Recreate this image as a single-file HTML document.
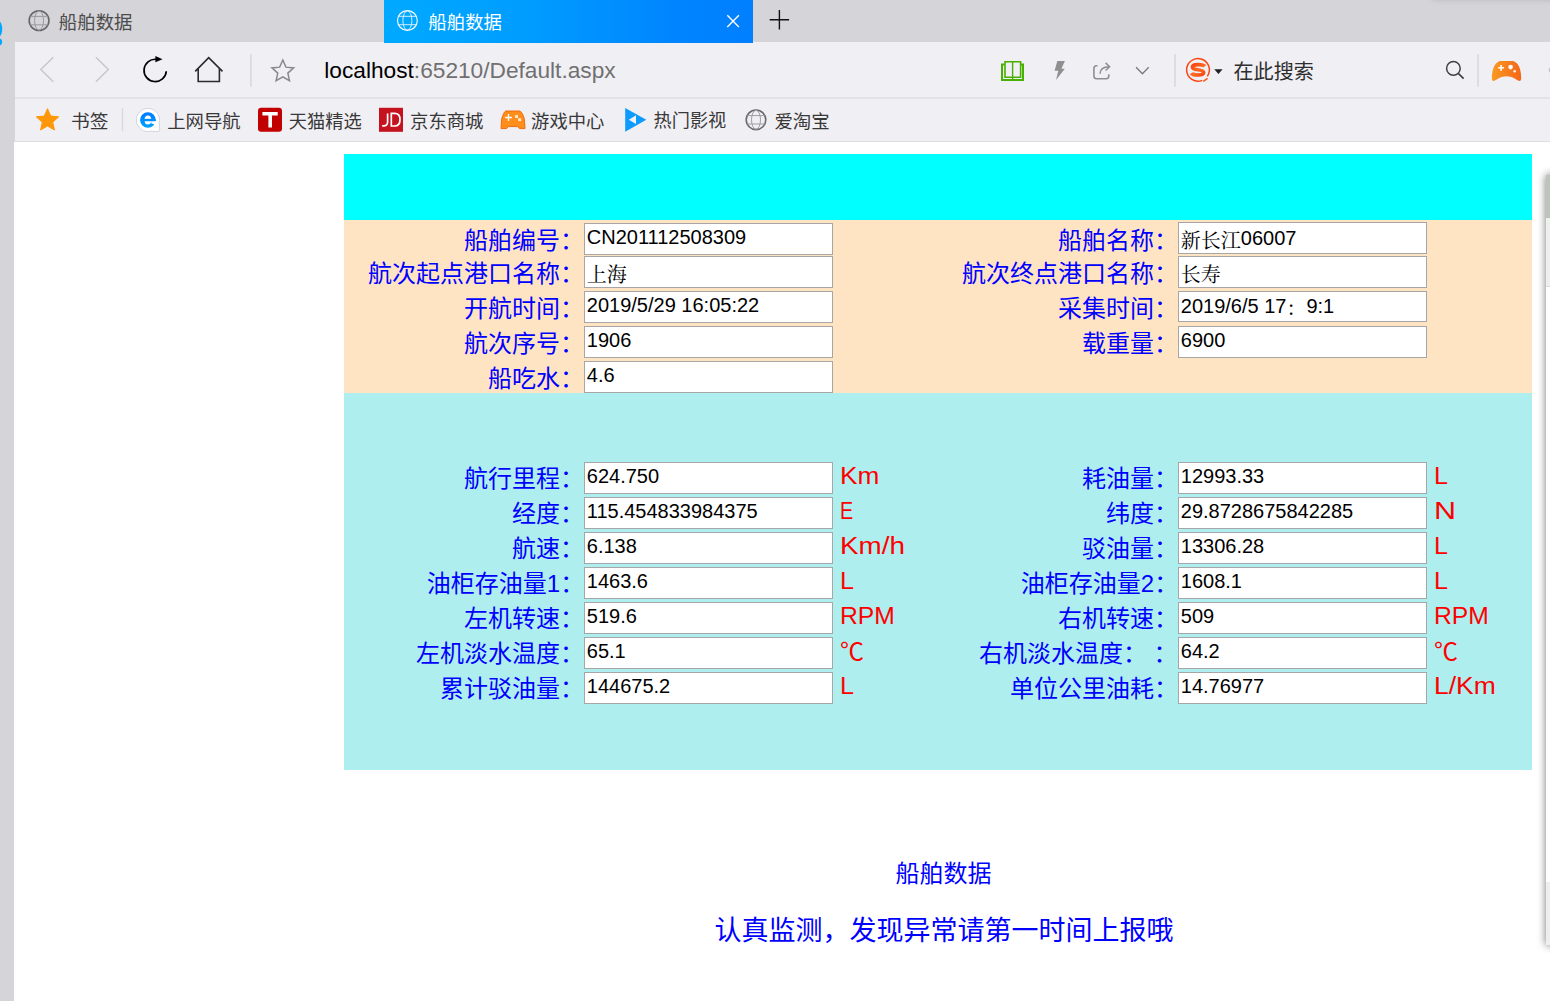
<!DOCTYPE html>
<html lang="zh-CN"><head><meta charset="utf-8"><title>船舶数据</title>
<style>
html,body{margin:0;padding:0}
body{width:1550px;height:1001px;overflow:hidden;position:relative;background:#fff;font-family:"Liberation Sans",sans-serif;color:#000}
div,svg,span,input{position:absolute;box-sizing:border-box}
.r{overflow:hidden;white-space:nowrap;font-family:"Liberation Sans","Noto Sans CJK SC",sans-serif}
.r span{left:0;top:0;white-space:nowrap}
.in .r{font-family:"Liberation Sans","Noto Serif CJK SC",serif}
.blk{position:absolute}
.in{height:31.5px;width:249px;background:#fff;border:1px solid #a6a6a6;overflow:hidden}
.in b{position:absolute;font-weight:normal;font-size:20px;line-height:24px;left:1.8px;top:1.2px;white-space:pre;color:#000}
.u{color:#f00;font-size:24.4px;line-height:28px;white-space:nowrap;transform-origin:0 50%}
.ico{overflow:visible}
</style></head>
<body>
<div class="blk" style="left:0;top:0;width:1550px;height:42px;background:#d5d4d9"></div>
<div class="blk" style="left:0;top:42px;width:14px;height:959px;background:#d5d4d9"></div>
<div class="blk" style="left:14px;top:42px;width:1px;height:99px;background:#d5d4d9"></div>
<div class="blk" style="left:15px;top:42px;width:1535px;height:100px;background:#f0eff4"></div>
<div class="blk" style="left:15px;top:97px;width:1535px;height:1.5px;background:#e3e3e7"></div>
<div class="blk" style="left:14px;top:140.6px;width:1536px;height:1.4px;background:#dddde1"></div>
<div class="blk" style="left:1433px;top:-14px;width:200px;height:12px;box-shadow:0 0 7px rgba(0,0,0,.25)"></div>
<svg class="ico" style="left:0;top:0" width="6" height="50"><ellipse cx="-1" cy="29" rx="3.2" ry="7.5" fill="#00a8ff"/><ellipse cx="-1" cy="42" rx="3.2" ry="3.6" fill="#00a8ff"/></svg>
<svg class="ico" style="left:0;top:0" width="1550" height="150" fill="none"><circle cx="39.05" cy="20.6" r="9.9" stroke="#666666" stroke-width="1.6"/><ellipse cx="39.05" cy="20.6" rx="4.5" ry="9.6" stroke="#9a9a9e" stroke-width="1"/><path d="M30.25 16.4h17.6 M30.25 24.8h17.6" stroke="#9a9a9e" stroke-width="1"/></svg>
<div class="r " style="left:58.85px;top:10.17px;width:73.72px;height:25.80px;font-size:18.43px;line-height:25.80px"><span style="color:#4c4c4c">船舶数据</span></div>
<div class="blk" style="left:384px;top:0;width:369px;height:43px;background:linear-gradient(90deg,#00a9ff 0%,#009cff 40%,#0084ff 80%,#007fff 100%)"></div>
<svg class="ico" style="left:0;top:0" width="1550" height="150" fill="none"><circle cx="407.4" cy="20.5" r="9.9" stroke="#ffffff" stroke-width="1.1"/><ellipse cx="407.4" cy="20.5" rx="4.5" ry="9.6" stroke="#e6f4ff" stroke-width="0.9"/><path d="M398.6 16.3h17.6 M398.6 24.7h17.6" stroke="#e6f4ff" stroke-width="0.9"/></svg>
<div class="r " style="left:428.36px;top:10.20px;width:73.62px;height:25.77px;font-size:18.40px;line-height:25.77px"><span style="color:#ffffff">船舶数据</span></div>
<svg class="ico" style="left:0;top:0" width="1550" height="50" fill="none"><path d="M727.3 15.3l11.6 11.6M738.9 15.3l-11.6 11.6" stroke="#fff" stroke-width="1.4"/><path d="M769.7 19.8h19.4M779.4 10.1v19.5" stroke="#111" stroke-width="1.4"/></svg>
<svg class="ico" style="left:0;top:0" width="1550" height="100" fill="none" stroke-linecap="butt"><path d="M53.3 57.3L40.8 69.6L53.3 81.8" stroke="#c6c6c8" stroke-width="1.4"/><path d="M95.9 57.3L108.4 69.6L95.9 81.8" stroke="#c6c6c8" stroke-width="1.4"/><path d="M166.3 71.2A11.15 11.15 0 1 1 156.2 59.3" stroke="#000" stroke-width="1.7"/><path d="M155.4 56.1L162.5 59.2L155.4 62.3z" fill="#000"/><path d="M195.2 71.4L208.7 57.6L222.5 71.4M198.2 68.6V81.5H219.4V68.6" stroke="#2b2b2b" stroke-width="1.6" stroke-linejoin="miter"/><path d="M250.9 54V86.8M1175 54V86.8M1478 54V86.8" stroke="#d9d9dd" stroke-width="1.6"/><path d="M282.80 60.05L285.92 67.16L293.64 67.93L287.84 73.09L289.50 80.67L282.80 76.75L276.10 80.67L277.76 73.09L271.96 67.93L279.68 67.16z" stroke="#898989" stroke-width="1.5" stroke-linejoin="miter"/><path d="M1004.6 64.6H1002V79.9H1023V64.6H1020.6" stroke="#48b000" stroke-width="2"/><path d="M1005 61.8V77.3H1020.6V61.8z" stroke="#48b000" stroke-width="1.6"/><path d="M1012.6 62V80" stroke="#48b000" stroke-width="1.4"/><path d="M1057.3 61H1064.9L1061.4 68.7H1064.8L1056 79.9L1058.3 70.7H1054.6z" fill="#8f8f8f"/><path d="M1097.5 65.8H1096.6Q1093.9 65.8 1093.9 68.6V76Q1093.9 78.8 1096.7 78.8H1106Q1108.8 78.8 1108.8 76V74.2" stroke="#909090" stroke-width="1.6"/><path d="M1100 73.8Q1100.2 66.8 1109 66.7M1105.6 62.9L1109.6 66.7L1105.6 70.5" stroke="#909090" stroke-width="1.5"/><path d="M1136.1 67.3L1142.4 73.8L1148.7 67.3" stroke="#7a7a7a" stroke-width="1.3"/><defs><linearGradient id="sg" x1="0" y1="0" x2="1" y2="1"><stop offset="0" stop-color="#f8420f"/><stop offset="0.55" stop-color="#ff6a22"/><stop offset="1" stop-color="#f8420f"/></linearGradient></defs><path d="M1207.3 76.41A11.35 11.35 0 1 0 1202.25 80.42" stroke="#fa4410" stroke-width="1.5"/><path d="M1203.3 81.4L1207.6 78.4" stroke="#fb5a14" stroke-width="1.7"/><path d="M1204.7 66.4C1203.7 64.9 1201 64.65 1198 64.65C1194.4 64.65 1192.45 65.6 1192.45 67.2C1192.45 68.9 1195 69.3 1198 69.8C1201 70.3 1203.6 70.8 1203.6 72.6C1203.6 74.4 1201.4 75 1198 75C1194.6 75 1192.2 74.6 1191.5 73.1" stroke="url(#sg)" stroke-width="3.7"/><path d="M1214.3 69.2H1222.6L1218.45 74z" fill="#222"/><circle cx="1453.4" cy="68.4" r="6.8" stroke="#404040" stroke-width="1.5"/><path d="M1458.3 73.4L1463.6 78.6" stroke="#404040" stroke-width="1.7"/><defs><linearGradient id="gp" x1="0" y1="0" x2="1" y2="0"><stop offset="0" stop-color="#f99a22"/><stop offset="1" stop-color="#f56618"/></linearGradient></defs><path d="M1499.6 61H1513.4L1516.9 63.3C1519.4 66.2 1521.2 70.6 1521.2 78.5Q1521.2 81.2 1519 81C1516 79.6 1512 76.3 1506.5 76.3C1501 76.3 1497 79.6 1494 81Q1491.9 81.2 1491.9 78.5C1491.9 70.6 1493.7 66.2 1496.2 63.3z" fill="url(#gp)"/><path d="M1498.2 67.8H1504M1501.1 64.9V70.7" stroke="#fff" stroke-width="1.5"/><circle cx="1510.6" cy="67.1" r="2.3" fill="#fff"/><circle cx="1514.7" cy="71.3" r="1.2" fill="#fff"/><circle cx="1552" cy="70" r="3.3" fill="#c4c4c8"/></svg>
<div class="blk" style="left:324.3px;top:56.3px;height:28px;font-size:22.7px;line-height:28px;white-space:nowrap;color:#707070"><i style="font-style:normal;color:#000">localhost</i>:65210/Default.aspx</div>
<div class="r " style="left:1233.54px;top:58.00px;width:80.41px;height:28.14px;font-size:20.10px;line-height:28.14px"><span style="color:#2e2e2e">在此搜索</span></div>
<svg class="ico" style="left:0;top:0" width="1550" height="150" fill="none"><path d="M47.50 108.70L50.73 116.05L58.72 116.85L52.73 122.20L54.44 130.05L47.50 126.00L40.56 130.05L42.27 122.20L36.28 116.85L44.27 116.05z" fill="#ff9708" stroke="#ff9708" stroke-width="1" stroke-linejoin="round"/><path d="M122.5 108V131.3" stroke="#d8d8dc" stroke-width="1.2"/><defs><linearGradient id="eg" gradientUnits="userSpaceOnUse" x1="0" y1="112" x2="0" y2="128"><stop offset="0" stop-color="#0078ff"/><stop offset="1" stop-color="#00a4ff"/></linearGradient></defs><path d="M151 131.2A11.6 11.6 0 1 1 159.2 123L159.6 129.8Q159.6 131.6 157.8 131.6z" fill="#fff" stroke="#cdd0d8" stroke-width="0.9"/><path fill-rule="evenodd" d="M140.1 120a7.8 7.8 0 1 0 15.6 0a7.8 7.8 0 1 0-15.6 0zM144.5 120a3.4 4.5 0 1 0 6.8 0a3.4 4.5 0 1 0-6.8 0z" fill="url(#eg)"/><rect x="144" y="118.85" width="11.6" height="2.4" fill="url(#eg)"/><path d="M151.2 121.3H157V125.4L151.2 123.3z" fill="#fff"/><rect x="258" y="107.8" width="24" height="24" rx="3.2" fill="#c10000"/><path d="M262.4 113.8H277.7M270.2 113.8V127.4" stroke="#fff" stroke-width="3.6"/><rect x="379" y="107.8" width="24" height="24" fill="#c5121f"/><path d="M382.2 125.6Q387.6 126.6 387.6 122V113.4M391.3 113.4V126H394.6Q400 126 400 119.7Q400 113.4 394.6 113.4z" stroke="#fff" stroke-width="1.7"/><path d="M505.6 111H519.6L521.4 112.2L523.2 115.4L524.4 119.2L525 128.6H519.6L517.4 126.6H508.6L506.4 128.6H501L501.6 119.2L502.8 115.4L504.4 112.2z" fill="#ff8e1c" stroke="#ea6404" stroke-width="0.9"/><path d="M505.1 117.5H511.9M508.5 114.1V120.9" stroke="#fff" stroke-width="1.3"/><rect x="515.1" y="115.1" width="2.9" height="2.9" fill="#ffe9cf"/><rect x="518.2" y="118.2" width="2.9" height="2.9" fill="#ffe9cf"/><path d="M625.2 108L646.3 119.7L625.2 131.8z" fill="#0d9bff"/><path d="M628.8 119.7L636 115.3V124.1z" fill="#eef4ff"/></svg>
<svg class="ico" style="left:0;top:0" width="1550" height="150" fill="none"><circle cx="756" cy="119.8" r="9.8" stroke="#6a6a6a" stroke-width="1.6"/><ellipse cx="756" cy="119.8" rx="4.5" ry="9.5" stroke="#9e9ea2" stroke-width="1"/><path d="M747.2 115.6h17.6 M747.2 124h17.6" stroke="#9e9ea2" stroke-width="1"/></svg>
<div class="r " style="left:71.08px;top:108.60px;width:37.39px;height:26.18px;font-size:18.70px;line-height:26.18px"><span style="color:#383838">书签</span></div>
<div class="r " style="left:167.26px;top:108.92px;width:73.53px;height:25.73px;font-size:18.38px;line-height:25.73px"><span style="color:#383838">上网导航</span></div>
<div class="r " style="left:288.73px;top:109.03px;width:73.09px;height:25.58px;font-size:18.27px;line-height:25.58px"><span style="color:#383838">天猫精选</span></div>
<div class="r " style="left:410.04px;top:108.92px;width:73.51px;height:25.73px;font-size:18.38px;line-height:25.73px"><span style="color:#383838">京东商城</span></div>
<div class="r " style="left:531.10px;top:108.97px;width:73.32px;height:25.66px;font-size:18.33px;line-height:25.66px"><span style="color:#383838">游戏中心</span></div>
<div class="r " style="left:653.62px;top:109.12px;width:72.72px;height:25.45px;font-size:18.18px;line-height:25.45px"><span style="color:#383838">热门影视</span></div>
<div class="r " style="left:774.42px;top:108.84px;width:55.38px;height:25.84px;font-size:18.46px;line-height:25.84px"><span style="color:#383838">爱淘宝</span></div>
<div class="blk" style="left:344px;top:154px;width:1188px;height:66px;background:#00ffff"></div>
<div class="blk" style="left:344px;top:220px;width:1188px;height:173px;background:#ffe4c4"></div>
<div class="blk" style="left:344px;top:393px;width:1188px;height:377px;background:#afeeee"></div>
<div class="r " style="left:464.00px;top:223.50px;width:120.00px;height:33.60px;font-size:24.00px;line-height:33.60px"><span style="color:#0000ff">船舶编号：</span></div>
<div class="in" style="left:584px;top:223.1px"><b>CN201112508309</b></div>
<div class="r " style="left:368.00px;top:257.10px;width:216.00px;height:33.60px;font-size:24.00px;line-height:33.60px"><span style="color:#0000ff">航次起点港口名称：</span></div>
<div class="in" style="left:584px;top:256.2px"><div class="r" style="left:1.80px;top:3.80px;width:40.00px;height:28.00px;font-size:20.00px;line-height:28.00px"><span style="color:#000">上海</span></div></div>
<div class="r " style="left:464.00px;top:291.70px;width:120.00px;height:33.60px;font-size:24.00px;line-height:33.60px"><span style="color:#0000ff">开航时间：</span></div>
<div class="in" style="left:584px;top:291.1px"><b>2019/5/29 16:05:22</b></div>
<div class="r " style="left:464.00px;top:326.70px;width:120.00px;height:33.60px;font-size:24.00px;line-height:33.60px"><span style="color:#0000ff">航次序号：</span></div>
<div class="in" style="left:584px;top:326.3px"><b>1906</b></div>
<div class="r " style="left:488.00px;top:361.60px;width:96.00px;height:33.60px;font-size:24.00px;line-height:33.60px"><span style="color:#0000ff">船吃水：</span></div>
<div class="in" style="left:584px;top:361.2px"><b>4.6</b></div>
<div class="r " style="left:1058.00px;top:223.50px;width:120.00px;height:33.60px;font-size:24.00px;line-height:33.60px"><span style="color:#0000ff">船舶名称：</span></div>
<div class="in" style="left:1178px;top:222.4px"><div class="r" style="left:1.80px;top:3.80px;width:60.00px;height:28.00px;font-size:20.00px;line-height:28.00px"><span style="color:#000">新长江</span></div><b style="left:61.80px;top:2.7px">06007</b></div>
<div class="r " style="left:962.00px;top:257.10px;width:216.00px;height:33.60px;font-size:24.00px;line-height:33.60px"><span style="color:#0000ff">航次终点港口名称：</span></div>
<div class="in" style="left:1178px;top:256.2px"><div class="r" style="left:1.80px;top:3.80px;width:40.00px;height:28.00px;font-size:20.00px;line-height:28.00px"><span style="color:#000">长寿</span></div></div>
<div class="r " style="left:1058.00px;top:291.70px;width:120.00px;height:33.60px;font-size:24.00px;line-height:33.60px"><span style="color:#0000ff">采集时间：</span></div>
<div class="in" style="left:1178px;top:290.5px"><b style="left:1.80px;top:2.7px">2019/6/5 17</b><div class="r" style="left:107.44px;top:3.80px;width:20.00px;height:28.00px;font-size:20.00px;line-height:28.00px"><span style="color:#000">：</span></div><b style="left:127.44px;top:2.7px">9:1</b></div>
<div class="r " style="left:1082.00px;top:326.70px;width:96.00px;height:33.60px;font-size:24.00px;line-height:33.60px"><span style="color:#0000ff">载重量：</span></div>
<div class="in" style="left:1178px;top:326px"><b>6900</b></div>
<div class="r " style="left:464.00px;top:462.35px;width:120.00px;height:33.60px;font-size:24.00px;line-height:33.60px"><span style="color:#0000ff">航行里程：</span></div>
<div class="in" style="left:584px;top:462.2px"><b>624.750</b></div>
<div class="u" style="left:840.1px;top:461.5px;transform:scaleX(1.075)">Km</div>
<div class="r " style="left:512.00px;top:497.35px;width:72.00px;height:33.60px;font-size:24.00px;line-height:33.60px"><span style="color:#0000ff">经度：</span></div>
<div class="in" style="left:584px;top:497.2px"><b>115.454833984375</b></div>
<div class="u" style="left:840.1px;top:496.5px;transform:scaleX(0.81)">E</div>
<div class="r " style="left:512.00px;top:532.35px;width:72.00px;height:33.60px;font-size:24.00px;line-height:33.60px"><span style="color:#0000ff">航速：</span></div>
<div class="in" style="left:584px;top:532.2px"><b>6.138</b></div>
<div class="u" style="left:840.1px;top:531.5px;transform:scaleX(1.14)">Km/h</div>
<div class="r " style="left:426.82px;top:567.35px;width:157.18px;height:33.60px;font-size:24.00px;line-height:33.60px"><span style="color:#0000ff">油柜存油量1：</span></div>
<div class="in" style="left:584px;top:567.2px"><b>1463.6</b></div>
<div class="u" style="left:840.1px;top:566.5px;transform:scaleX(1.03)">L</div>
<div class="r " style="left:464.00px;top:602.35px;width:120.00px;height:33.60px;font-size:24.00px;line-height:33.60px"><span style="color:#0000ff">左机转速：</span></div>
<div class="in" style="left:584px;top:602.2px"><b>519.6</b></div>
<div class="u" style="left:840.1px;top:601.5px;transform:scaleX(1.012)">RPM</div>
<div class="r " style="left:416.00px;top:637.35px;width:168.00px;height:33.60px;font-size:24.00px;line-height:33.60px"><span style="color:#0000ff">左机淡水温度：</span></div>
<div class="in" style="left:584px;top:637.2px"><b>65.1</b></div>
<div class="r " style="left:840.00px;top:635.40px;width:24.00px;height:33.60px;font-size:24.00px;line-height:33.60px"><span style="color:#ff0000">℃</span></div>
<div class="r " style="left:440.00px;top:672.35px;width:144.00px;height:33.60px;font-size:24.00px;line-height:33.60px"><span style="color:#0000ff">累计驳油量：</span></div>
<div class="in" style="left:584px;top:672.2px"><b>144675.2</b></div>
<div class="u" style="left:840.1px;top:671.5px;transform:scaleX(1.03)">L</div>
<div class="r " style="left:1082.00px;top:462.35px;width:96.00px;height:33.60px;font-size:24.00px;line-height:33.60px"><span style="color:#0000ff">耗油量：</span></div>
<div class="in" style="left:1178px;top:462.2px"><b>12993.33</b></div>
<div class="u" style="left:1434.2px;top:461.5px;transform:scaleX(1.03)">L</div>
<div class="r " style="left:1106.00px;top:497.35px;width:72.00px;height:33.60px;font-size:24.00px;line-height:33.60px"><span style="color:#0000ff">纬度：</span></div>
<div class="in" style="left:1178px;top:497.2px"><b>29.8728675842285</b></div>
<div class="u" style="left:1434.2px;top:496.5px;transform:scaleX(1.25)">N</div>
<div class="r " style="left:1082.00px;top:532.35px;width:96.00px;height:33.60px;font-size:24.00px;line-height:33.60px"><span style="color:#0000ff">驳油量：</span></div>
<div class="in" style="left:1178px;top:532.2px"><b>13306.28</b></div>
<div class="u" style="left:1434.2px;top:531.5px;transform:scaleX(1.03)">L</div>
<div class="r " style="left:1020.82px;top:567.35px;width:157.18px;height:33.60px;font-size:24.00px;line-height:33.60px"><span style="color:#0000ff">油柜存油量2：</span></div>
<div class="in" style="left:1178px;top:567.2px"><b>1608.1</b></div>
<div class="u" style="left:1434.2px;top:566.5px;transform:scaleX(1.03)">L</div>
<div class="r " style="left:1058.00px;top:602.35px;width:120.00px;height:33.60px;font-size:24.00px;line-height:33.60px"><span style="color:#0000ff">右机转速：</span></div>
<div class="in" style="left:1178px;top:602.2px"><b>509</b></div>
<div class="u" style="left:1434.2px;top:601.5px;transform:scaleX(1.012)">RPM</div>
<div class="r " style="left:978.92px;top:637.35px;width:199.08px;height:33.60px;font-size:24.00px;line-height:33.60px"><span style="color:#0000ff">右机淡水温度： ：</span></div>
<div class="in" style="left:1178px;top:637.2px"><b>64.2</b></div>
<div class="r " style="left:1434.10px;top:635.40px;width:24.00px;height:33.60px;font-size:24.00px;line-height:33.60px"><span style="color:#ff0000">℃</span></div>
<div class="r " style="left:1010.00px;top:672.35px;width:168.00px;height:33.60px;font-size:24.00px;line-height:33.60px"><span style="color:#0000ff">单位公里油耗：</span></div>
<div class="in" style="left:1178px;top:672.2px"><b>14.76977</b></div>
<div class="u" style="left:1434.2px;top:671.5px;transform:scaleX(1.085)">L/Km</div>
<div class="r " style="left:895.60px;top:856.60px;width:96.00px;height:33.60px;font-size:24.00px;line-height:33.60px"><span style="color:#0000ff">船舶数据</span></div>
<div class="r " style="left:714.50px;top:912.70px;width:459.00px;height:37.80px;font-size:27.00px;line-height:37.80px"><span style="color:#0000ff">认真监测，发现异常请第一时间上报哦</span></div>
<div class="blk" style="left:1546px;top:175px;width:20px;height:770px;background:#fff;box-shadow:0 0 9px rgba(0,0,0,.55)"><div class="blk" style="left:0;top:0;width:20px;height:43px;background:#bcc5b9"></div><div class="blk" style="left:0;top:43px;width:20px;height:69px;background:#eef0ee;border-bottom:1px solid #d8d8d8"></div><div class="blk" style="left:0;top:707px;width:20px;height:63px;background:#eeeeee"></div></div>
</body></html>
